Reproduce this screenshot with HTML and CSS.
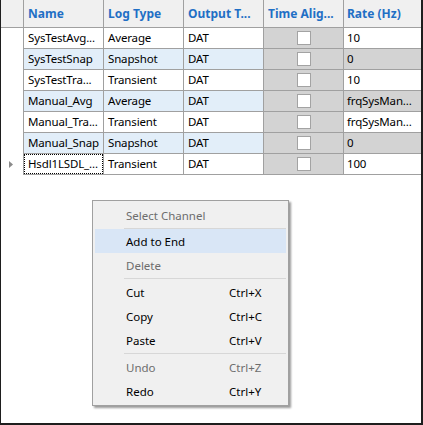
FILE: index.html
```html
<!DOCTYPE html>
<html>
<head>
<meta charset="utf-8">
<link rel="stylesheet" href="styles.css">
</head>
<body>
<div class="frame">
  <div class="grid">
    <div class="hc rh"></div>
    <div class="hc">Name</div>
    <div class="hc">Log Type</div>
    <div class="hc">Output T...</div>
    <div class="hc">Time Alig...</div>
    <div class="hc last">Rate (Hz)</div>

    <div class="c rh"></div>
    <div class="c">SysTestAvg...</div>
    <div class="c">Average</div>
    <div class="c">DAT</div>
    <div class="c gray"><span class="cb"></span></div>
    <div class="c last">10</div>

    <div class="c rh"></div>
    <div class="c alt">SysTestSnap</div>
    <div class="c alt">Snapshot</div>
    <div class="c alt">DAT</div>
    <div class="c gray"><span class="cb"></span></div>
    <div class="c last gray">0</div>

    <div class="c rh"></div>
    <div class="c">SysTestTra...</div>
    <div class="c">Transient</div>
    <div class="c">DAT</div>
    <div class="c gray"><span class="cb"></span></div>
    <div class="c last">10</div>

    <div class="c rh"></div>
    <div class="c alt">Manual_Avg</div>
    <div class="c alt">Average</div>
    <div class="c alt">DAT</div>
    <div class="c gray"><span class="cb"></span></div>
    <div class="c last gray">frqSysMan...</div>

    <div class="c rh"></div>
    <div class="c">Manual_Tra...</div>
    <div class="c">Transient</div>
    <div class="c">DAT</div>
    <div class="c gray"><span class="cb"></span></div>
    <div class="c last">frqSysMan...</div>

    <div class="c rh"></div>
    <div class="c alt">Manual_Snap</div>
    <div class="c alt">Snapshot</div>
    <div class="c alt">DAT</div>
    <div class="c gray"><span class="cb"></span></div>
    <div class="c last gray">0</div>

    <div class="c rh"><svg class="arrow" width="4" height="7" viewBox="0 0 4 7"><path d="M0 0 L4 3.5 L0 7 Z" fill="#8a8a8a"/></svg></div>
    <div class="c focus"><span>Hsdl1LSDL_...</span></div>
    <div class="c">Transient</div>
    <div class="c">DAT</div>
    <div class="c gray"><span class="cb"></span></div>
    <div class="c last">100</div>
  </div>

  <div class="menu">
    <div class="item dis"><span class="lbl">Select Channel</span></div>
    <div class="sep"></div>
    <div class="item hi"><span class="lbl">Add to End</span></div>
    <div class="item dis"><span class="lbl">Delete</span></div>
    <div class="sep wide"></div>
    <div class="item"><span class="lbl">Cut</span><span class="key">Ctrl+X</span></div>
    <div class="item"><span class="lbl">Copy</span><span class="key">Ctrl+C</span></div>
    <div class="item"><span class="lbl">Paste</span><span class="key">Ctrl+V</span></div>
    <div class="sep wide"></div>
    <div class="item dis"><span class="lbl">Undo</span><span class="key">Ctrl+Z</span></div>
    <div class="item"><span class="lbl">Redo</span><span class="key">Ctrl+Y</span></div>
  </div>
</div>
</body>
</html>
```

FILE: styles.css
```css
html, body {
  margin: 0;
  padding: 0;
  background: #ffffff;
}

.frame {
  position: relative;
  width: 423px;
  height: 425px;
  box-sizing: border-box;
  border-left: 1px solid #1e1e1e;
  border-right: 2px solid #1e1e1e;
  border-bottom: 2px solid #1e1e1e;
  background: #ffffff;
  font-family: "Noto Sans", "Open Sans", sans-serif;
  font-size: 11.5px;
  color: #000;
  overflow: hidden;
}

.grid {
  display: grid;
  grid-template-columns: 23px 80px 80px 80px 80px 77px;
  grid-template-rows: 28px repeat(7, 21px);
}

.hc {
  background: #f0f0f0;
  border-right: 1px solid #a0a0a0;
  border-bottom: 1px solid #a0a0a0;
  color: #1f6fc5;
  font-weight: bold;
  font-size: 12px;
  padding-left: 4px;
  line-height: 27px;
  white-space: nowrap;
  overflow: hidden;
}

.hc.rh {
  padding-left: 0;
}

.hc.last {
  border-right: none;
  padding-left: 3px;
}

.c {
  background: #ffffff;
  border-right: 1px solid #a0a0a0;
  border-bottom: 1px solid #a0a0a0;
  padding-left: 4px;
  line-height: 20px;
  letter-spacing: -0.15px;
  white-space: nowrap;
  overflow: hidden;
  position: relative;
}

.c.rh {
  border-bottom: none;
  padding-left: 0;
  display: flex;
  align-items: center;
}

.c.last {
  border-right: none;
  padding-left: 3px;
}

.c.alt {
  background: #e2eef9;
}

.c.gray {
  background: #d3d3d3;
}

.cb {
  position: absolute;
  left: 33px;
  top: 3px;
  width: 12px;
  height: 12px;
  background: #ffffff;
  border: 1px solid #a3a3a3;
}

.arrow {
  margin-left: 8px;
}

.c.focus {
  padding-left: 0;
}

.c.focus span {
  display: block;
  height: 18px;
  line-height: 18px;
  padding-left: 3px;
  border: 1px dotted #000;
}

.menu {
  position: absolute;
  left: 91px;
  top: 200px;
  width: 191px;
  padding: 2px;
  background: #f0f0f0;
  border: 1px solid #a0a0a0;
  box-shadow: 2px 2px 2px rgba(0, 0, 0, 0.4);
}

.item {
  display: flex;
  height: 24px;
  align-items: center;
  color: #000;
  white-space: nowrap;
}

.item .lbl {
  padding-left: 31px;
  width: 103px;
}

.item.dis {
  color: #6d6d6d;
}

.item.hi {
  background: #d9e6f6;
}

.sep {
  height: 1px;
  margin: 1px 0 0 29px;
  background: #d7d7d7;
}

.sep.wide {
  margin: 1px 0 1px 29px;
}
```
